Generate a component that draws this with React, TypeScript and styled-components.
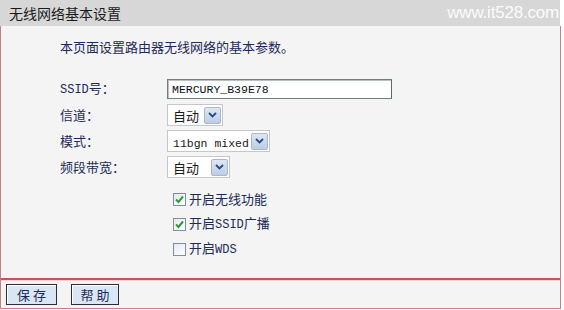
import styled, { createGlobalStyle } from "styled-components";

const GlobalStyle = createGlobalStyle`
    html, body {
        margin: 0;
        padding: 0;
        background: #ffffff;
    }
    body {
        font-family: "Noto Sans CJK SC", "Liberation Sans", sans-serif;
        font-size: 13px;
    }
`

type CheckProps = {
    label: React.ReactNode;
    checked?: boolean;
}

const BeCheck = ({ label, checked = false }: CheckProps) => {
    return <StyledCheckRow>
        <StyledBox>
            {checked ? <svg width="11" height="11" viewBox="0 0 11 11">
                <path d="M2 5.5 L4.5 8 L9 2.5" fill="none" stroke="#2f9a3a" strokeWidth="2" />
            </svg> : <></>}
        </StyledBox>
        <StyledLabel>{label}</StyledLabel>
    </StyledCheckRow>
}

type SelectProps = {
    value: React.ReactNode;
    width: number;
}

const BeSelect = ({ value, width }: SelectProps) => {
    return <StyledSelect $width={width}>
        <StyledSelectValue>{value}</StyledSelectValue>
        <StyledArrow>
            <svg width="9" height="6" viewBox="0 0 9 6">
                <path d="M1 1 L4.5 4.5 L8 1" fill="none" stroke="#2a4a86" strokeWidth="1.8" />
            </svg>
        </StyledArrow>
    </StyledSelect>
}

const App = () => {
    return <>
        <GlobalStyle />
        <StyledPage>
            <StyledHeader>
                <StyledTitle>无线网络基本设置</StyledTitle>
                <StyledMark>www.it528.com</StyledMark>
            </StyledHeader>
            <StyledPanel>
                <StyledBody>
                    <StyledIntro>本页面设置路由器无线网络的基本参数。</StyledIntro>
                    <StyledForm>
                        <StyledLabel><StyledLatin>SSID</StyledLatin>号：</StyledLabel>
                        <StyledInput>MERCURY_B39E78</StyledInput>
                        <StyledLabel>信道：</StyledLabel>
                        <BeSelect value="自动" width={56} />
                        <StyledLabel>模式：</StyledLabel>
                        <BeSelect value={<StyledMono>11bgn mixed</StyledMono>} width={103} />
                        <StyledLabel>频段带宽：</StyledLabel>
                        <BeSelect value="自动" width={63} />
                    </StyledForm>
                    <StyledChecks>
                        <BeCheck checked label="开启无线功能" />
                        <BeCheck checked label={<>开启<StyledLatin>SSID</StyledLatin>广播</>} />
                        <BeCheck label={<>开启<StyledLatin>WDS</StyledLatin></>} />
                    </StyledChecks>
                </StyledBody>
                <StyledFooter>
                    <StyledButton type="button">保 存</StyledButton>
                    <StyledButton type="button">帮 助</StyledButton>
                </StyledFooter>
            </StyledPanel>
        </StyledPage>
    </>
}
export default App;

const StyledPage = styled.div`
    width: 564px;
    height: 310px;
    background: #ffffff;
`
const StyledHeader = styled.div`
    width: 560px;
    height: 26px;
    background-color: #d7d7d7;
    display: flex;
    align-items: center;
    justify-content: space-between;
    box-sizing: border-box;
    padding: 0 1px 0 9px;
`
const StyledTitle = styled.span`
    font-size: 14px;
    color: #1a1a1a;
    line-height: 26px;
`
const StyledMark = styled.span`
    font-family: "Liberation Sans", sans-serif;
    font-size: 17px;
    color: rgba(255, 255, 255, 0.92);
    letter-spacing: -0.2px;
`
const StyledPanel = styled.div`
    width: 561px;
    height: 283px;
    box-sizing: border-box;
    border: 1px solid #c08282;
    border-top: 0;
    background-color: #f4f4f4;
    display: flex;
    flex-direction: column;
`
const StyledBody = styled.div`
    height: 254px;
    box-sizing: border-box;
    padding: 11px 0 0 59px;
    border-bottom: 2px solid #c05656;
`
const StyledIntro = styled.div`
    font-size: 13px;
    line-height: 20px;
    color: #1c2b57;
    margin-bottom: 19px;
`
const StyledForm = styled.div`
    display: grid;
    grid-template-columns: 107px auto;
    grid-auto-rows: 26px;
    align-items: center;
    justify-items: start;
`
const StyledLabel = styled.span`
    font-size: 13px;
    color: #1c2b57;
    line-height: 16px;
    white-space: nowrap;
`
const StyledLatin = styled.span`
    font-family: "Liberation Mono", monospace;
    font-size: 12px;
`
const StyledMono = styled.span`
    font-family: "Liberation Mono", monospace;
    font-size: 11.5px;
`
const StyledInput = styled.div`
    width: 225px;
    height: 20px;
    box-sizing: border-box;
    border: 1px solid #6f7f7f;
    border-right-color: #5a6a6a;
    box-shadow: inset 1px 1px 0 #b8c0c0;
    background: #ffffff;
    font-family: "Liberation Mono", monospace;
    font-size: 11.5px;
    color: #0a1018;
    padding: 0 4px;
    display: flex;
    align-items: center;
`
const StyledSelect = styled.div<{ $width: number }>`
    width: ${p => p.$width}px;
    height: 22px;
    box-sizing: border-box;
    border: 1px solid #c4c8cc;
    background: #ffffff;
    display: flex;
    align-items: center;
    justify-content: space-between;
    padding: 0 1px 0 5px;
`
const StyledSelectValue = styled.span`
    font-size: 13px;
    color: #1a1a1a;
    white-space: nowrap;
`
const StyledArrow = styled.span`
    width: 17px;
    height: 17px;
    flex-shrink: 0;
    box-sizing: border-box;
    border: 1px solid #a9b8cc;
    border-radius: 2px;
    background: linear-gradient(#dde7f3, #bccde4);
    display: flex;
    align-items: center;
    justify-content: center;
`
const StyledChecks = styled.div`
    display: flex;
    flex-direction: column;
    gap: 11px;
    padding: 12px 0 0 113px;
`
const StyledCheckRow = styled.label`
    display: flex;
    align-items: center;
    gap: 3px;
    height: 14px;
`
const StyledBox = styled.span`
    width: 13px;
    height: 13px;
    box-sizing: border-box;
    border: 1px solid #7d8fa6;
    background: linear-gradient(135deg, #e4e8ee, #ffffff);
    display: flex;
    align-items: center;
    justify-content: center;
`
const StyledFooter = styled.div`
    flex: 1;
    display: flex;
    align-items: center;
    gap: 14px;
    padding: 0 0 1px 5px;
    border-top: 1px solid #f3d0d0;
`
const StyledButton = styled.button`
    width: 51px;
    height: 21px;
    box-sizing: border-box;
    border: 1px solid #2c2c3c;
    background-color: #dbe6f4;
    box-shadow: inset 1px 1px 0 #ffffff;
    font-family: "Noto Sans CJK SC", sans-serif;
    font-size: 13px;
    color: #1c2b57;
    padding: 0;
    line-height: 19px;
    &:nth-child(2){
        width: 48px;
    }
`
